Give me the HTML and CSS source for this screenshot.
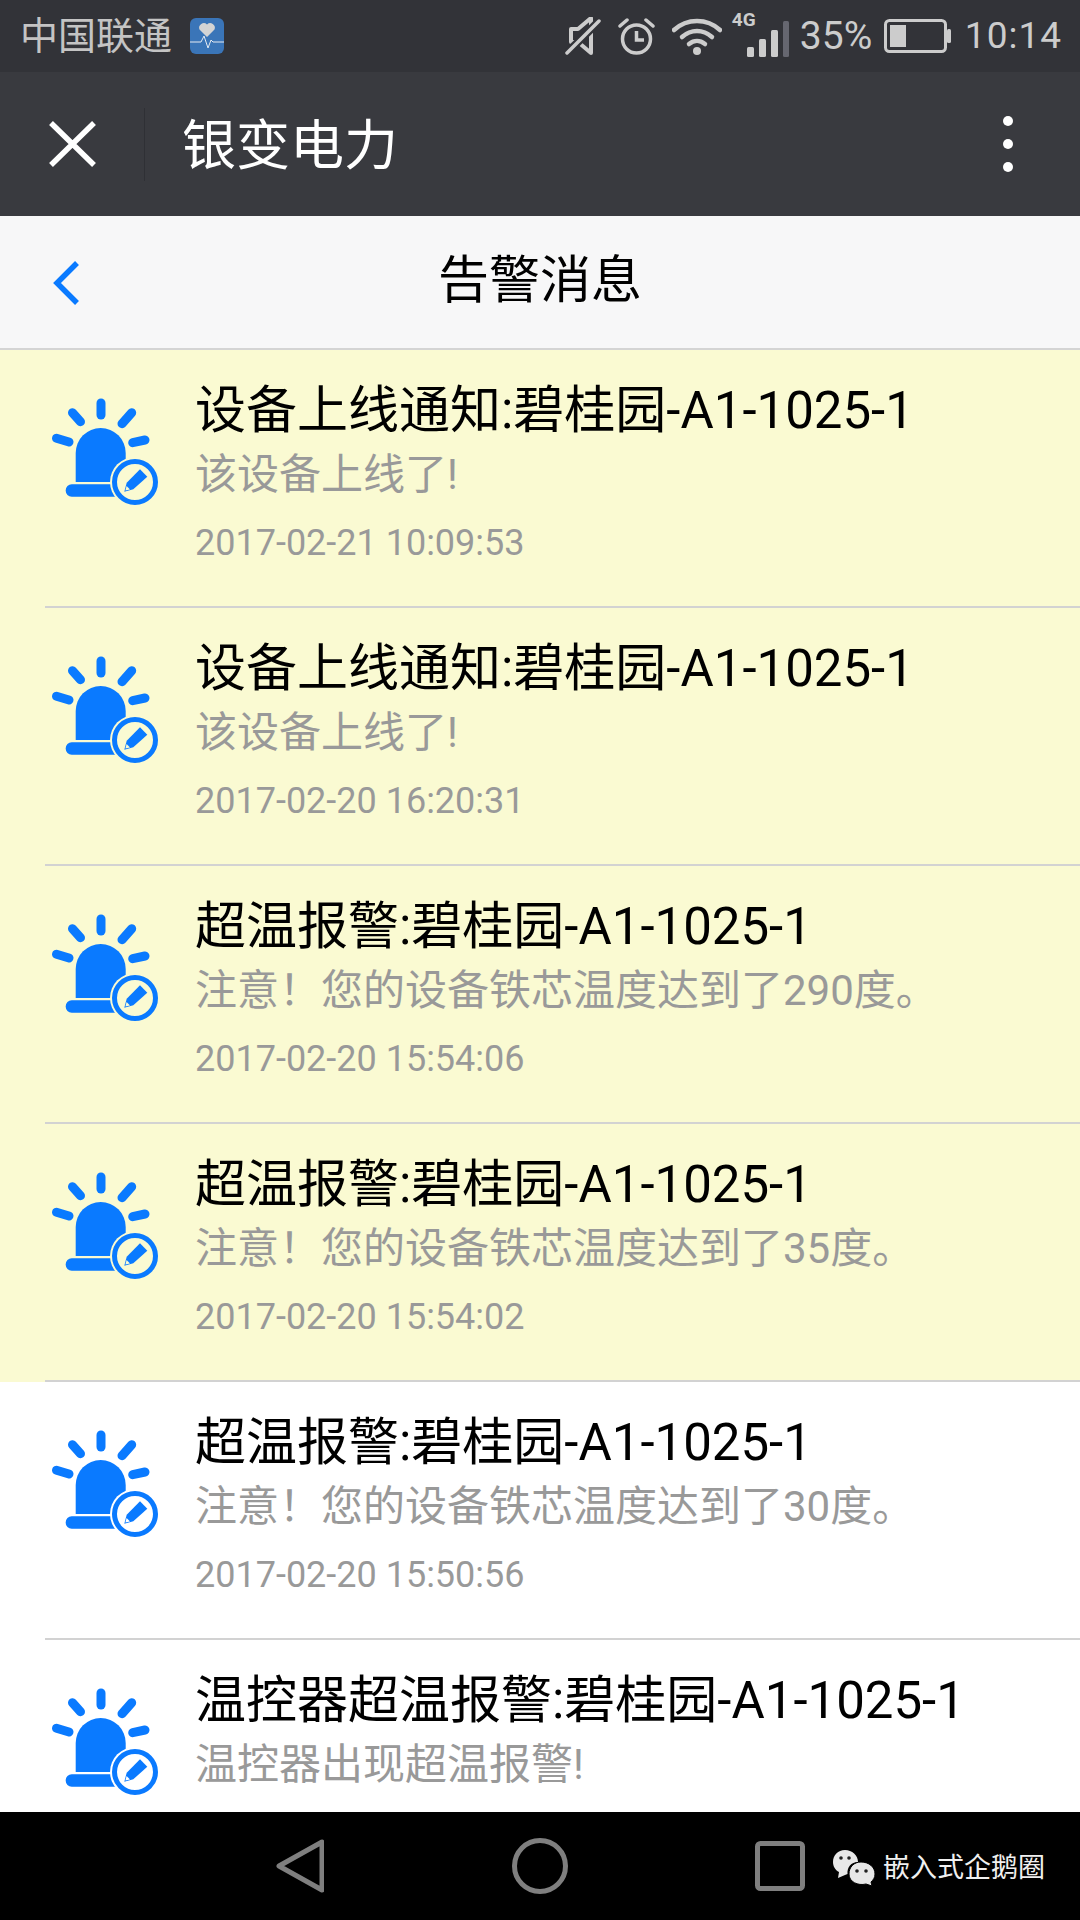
FILE: index.html
```html
<!DOCTYPE html>
<html lang="zh">
<head>
<meta charset="utf-8">
<title>告警消息</title>
<link rel="stylesheet" href="styles.css">
</head>
<body>
<svg class="defs" width="0" height="0" aria-hidden="true">
  <symbol id="siren" viewBox="0 0 110 110">
    <g class="rays">
      <line x1="51" y1="7" x2="51" y2="19"/>
      <line x1="22.500" y1="16.700" x2="30.500" y2="25.700"/>
      <line x1="81.700" y1="16.700" x2="72" y2="27.700"/>
      <line x1="6.500" y1="42.300" x2="19" y2="46"/>
      <line x1="95" y1="44" x2="82.700" y2="46.700"/>
    </g>
    <path class="blue" d="M25.700 86V57a25 25 0 0 1 50 0V86Z"/>
    <rect class="blue" x="15.700" y="88.300" width="72" height="12.400" rx="6"/>
    <circle class="gap" cx="85" cy="86" r="25"/>
    <circle class="ring" cx="85" cy="86" r="20.500"/>
    <path class="blue" d="M74.300 95.700 76.700 86.700 90 73.300 97.300 80.700 83.300 93.300Z"/>
    <path class="gap" d="M75.400 94.600 76.600 90 80 93.400Z"/>
  </symbol>
</svg>
<div class="page">
  <div class="status">
    <div class="status-left">
      <span class="carrier">中国联通</span>
      <svg class="health" width="34" height="36" viewBox="0 0 34 36">
        <rect width="34" height="36" rx="6" fill="#3a75b8"/>
        <path d="M17 19 9.500 11.500a4.600 4.600 0 0 1 7.500-5 4.600 4.600 0 0 1 7.500 5Z" fill="#d4d4d4"/>
        <path d="M0 24H11L14 18 18 30 21 22 23 24H34" fill="none" stroke="#e4eaf2" stroke-width="1"/>
      </svg>
    </div>
    <div class="status-right">
      <svg class="ico-mute" width="36" height="38" viewBox="0 0 36 38">
        <path d="M6 13H13L26 2V37L13 26 6 26Z" fill="none" stroke="#ccc" stroke-width="4" stroke-linejoin="round" transform="translate(0 -1)"/>
        <line x1="2" y1="36" x2="34" y2="4" stroke="#323338" stroke-width="8"/>
        <line x1="2" y1="36" x2="34" y2="4" stroke="#ccc" stroke-width="3.500" stroke-linecap="round"/>
      </svg>
      <svg class="ico-alarm" width="37" height="38" viewBox="0 0 37 38">
        <circle cx="18.500" cy="22" r="14" fill="none" stroke="#ccc" stroke-width="3.500"/>
        <path d="M18.500 14V23H26" fill="none" stroke="#ccc" stroke-width="3.500"/>
        <path d="M2 9 9 3M35 9 28 3" stroke="#ccc" stroke-width="3.500" stroke-linecap="round"/>
      </svg>
      <svg class="ico-wifi" width="50" height="38" viewBox="0 0 50 38">
        <path d="M2 13C15 1 35 1 48 13" fill="none" stroke="#ccc" stroke-width="4.500" stroke-linecap="round"/>
        <path d="M10 20C19 12 31 12 40 20" fill="none" stroke="#ccc" stroke-width="4.500" stroke-linecap="round"/>
        <path d="M17 27C22 23 28 23 33 27" fill="none" stroke="#ccc" stroke-width="4.500" stroke-linecap="round"/>
        <circle cx="25" cy="34" r="4" fill="#ccc"/>
      </svg>
      <div class="signal">
        <span class="four-g">4G</span>
        <svg width="43" height="36" viewBox="0 0 43 36" class="bars">
          <rect x="0" y="26" width="7" height="10" rx="1.500" fill="#ccc"/>
          <rect x="12" y="18" width="7" height="18" rx="1.500" fill="#ccc"/>
          <rect x="24" y="9" width="7" height="27" rx="1.500" fill="#ccc"/>
          <rect x="36" y="0" width="6" height="36" rx="1.500" fill="#666770"/>
        </svg>
      </div>
      <span class="percent">35%</span>
      <svg class="ico-battery" width="67" height="34" viewBox="0 0 67 34">
        <rect x="1.500" y="1.500" width="60" height="31" rx="4" fill="none" stroke="#ccc" stroke-width="3"/>
        <rect x="6" y="6" width="16" height="22" fill="#ccc"/>
        <rect x="63" y="10" width="4" height="14" rx="1.500" fill="#ccc"/>
      </svg>
      <span class="clock">10:14</span>
    </div>
  </div>

  <div class="nav">
    <svg class="close" width="47" height="46" viewBox="0 0 47 46">
      <path d="M2 2 45 44M45 2 2 44" stroke="#fff" stroke-width="5.500"/>
    </svg>
    <div class="nav-div"></div>
    <div class="nav-title">银变电力</div>
    <div class="more"><i></i><i></i><i></i></div>
  </div>

  <div class="header">
    <svg class="back" width="26" height="44" viewBox="0 0 26 44">
      <path d="M24 2 4 22 24 42" fill="none" stroke="#0a7aff" stroke-width="5.500"/>
    </svg>
    <div class="header-title">告警消息</div>
  </div>

  <div class="list">
    <div class="item unread"><div class="row">
      <svg class="siren"><use href="#siren"/></svg>
      <div class="text">
        <div class="title">设备上线通知:碧桂园-A1-1025-1</div>
        <div class="sub">该设备上线了!</div>
        <div class="date">2017-02-21 10:09:53</div>
      </div>
    </div></div>
    <div class="item unread"><div class="row">
      <svg class="siren"><use href="#siren"/></svg>
      <div class="text">
        <div class="title">设备上线通知:碧桂园-A1-1025-1</div>
        <div class="sub">该设备上线了!</div>
        <div class="date">2017-02-20 16:20:31</div>
      </div>
    </div></div>
    <div class="item unread"><div class="row">
      <svg class="siren"><use href="#siren"/></svg>
      <div class="text">
        <div class="title">超温报警:碧桂园-A1-1025-1</div>
        <div class="sub">注意！您的设备铁芯温度达到了290度。</div>
        <div class="date">2017-02-20 15:54:06</div>
      </div>
    </div></div>
    <div class="item unread"><div class="row">
      <svg class="siren"><use href="#siren"/></svg>
      <div class="text">
        <div class="title">超温报警:碧桂园-A1-1025-1</div>
        <div class="sub">注意！您的设备铁芯温度达到了35度。</div>
        <div class="date">2017-02-20 15:54:02</div>
      </div>
    </div></div>
    <div class="item"><div class="row">
      <svg class="siren"><use href="#siren"/></svg>
      <div class="text">
        <div class="title">超温报警:碧桂园-A1-1025-1</div>
        <div class="sub">注意！您的设备铁芯温度达到了30度。</div>
        <div class="date">2017-02-20 15:50:56</div>
      </div>
    </div></div>
    <div class="item"><div class="row row-last">
      <svg class="siren"><use href="#siren"/></svg>
      <div class="text">
        <div class="title">温控器超温报警:碧桂园-A1-1025-1</div>
        <div class="sub">温控器出现超温报警!</div>
      </div>
    </div></div>
  </div>

  <div class="sysnav">
    <svg class="sys-back" width="48" height="54" viewBox="0 0 48 54">
      <path d="M46 3V51L3 27Z" fill="none" stroke="#7f7f7f" stroke-width="5" stroke-linejoin="round"/>
    </svg>
    <svg class="sys-home" width="56" height="56" viewBox="0 0 56 56">
      <circle cx="28" cy="28" r="25.500" fill="none" stroke="#7f7f7f" stroke-width="5"/>
    </svg>
    <svg class="sys-recent" width="50" height="50" viewBox="0 0 50 50">
      <rect x="2.500" y="2.500" width="45" height="45" rx="3" fill="none" stroke="#7f7f7f" stroke-width="5"/>
    </svg>
    <div class="watermark">
      <svg width="42" height="36" viewBox="0 0 42 36">
        <path d="M12 0C19 0 25 5 25 12 18 12 14 17 14.500 24L12 25 5 28 6 22C2 20 0 16 0 12 0 5 5 0 12 0Z" fill="#e8e8e8"/>
        <path d="M28 12C36 12 42 17 42 24 42 28 40 30 38 32L39 36 33 34C25 36 16 32 16 24 16 17 21 12 28 12Z" fill="#e8e8e8" stroke="#000" stroke-width="1"/>
        <circle cx="8" cy="8" r="1.800" fill="#222"/><circle cx="16" cy="8" r="1.800" fill="#222"/>
        <circle cx="24" cy="21" r="1.800" fill="#222"/><circle cx="33" cy="21" r="1.800" fill="#222"/>
      </svg>
      <span>嵌入式企鹅圈</span>
    </div>
  </div>
</div>
</body>
</html>
```

FILE: styles.css
```css
* { box-sizing: border-box; }
html, body { margin: 0; padding: 0; }
body {
  width: 1080px;
  height: 1920px;
  overflow: hidden;
  font-family: Roboto, "Noto Sans CJK SC", sans-serif;
}
.defs { display: block; height: 0; }
.page {
  width: 1080px;
  height: 1920px;
  display: flex;
  flex-direction: column;
  overflow: hidden;
  background: #fff;
}

/* status bar */
.status {
  height: 72px;
  flex: none;
  background: #323338;
  color: #ccc;
  display: flex;
  align-items: center;
  justify-content: space-between;
  padding: 0 18px 0 20px;
}
.status-left { display: flex; align-items: center; gap: 18px; }
.carrier { font-size: 38px; line-height: 72px; color: #c4c4c4; }
.status-right { display: flex; align-items: center; }
.ico-mute { margin-right: 17px; }
.ico-alarm { margin-right: 17px; }
.ico-wifi { margin-right: 10px; }
.signal {
  width: 58px;
  height: 44px;
  position: relative;
  margin-right: 10px;
  margin-top: -2px;
}
.four-g {
  position: absolute;
  left: 0;
  top: -3px;
  font: 700 19px/20px Roboto, sans-serif;
  color: #ccc;
}
.bars { position: absolute; left: 15px; top: 8px; }
.percent { font-size: 39px; line-height: 72px; width: 84px; color: #ccc; white-space: nowrap; }
.ico-battery { margin-right: 14px; }
.clock { font-size: 37px; line-height: 72px; letter-spacing: 1px; color: #ccc; }

/* WeChat nav */
.nav {
  height: 144px;
  flex: none;
  background: #393a3f;
  display: flex;
  align-items: center;
  padding-left: 49px;
}
.close { flex: none; margin-right: 48px; }
.nav-div { width: 1px; height: 73px; background: #2f3035; margin-right: 37px; }
.nav-title { font-size: 54px; line-height: 72px; color: #fff; flex: 1; margin-top: 6px; }
.more {
  display: flex;
  flex-direction: column;
  gap: 13px;
  margin-right: 67px;
}
.more i { display: block; width: 10px; height: 10px; border-radius: 50%; background: #fff; }

/* page header */
.header {
  height: 134px;
  flex: none;
  background: #f7f7f8;
  border-bottom: 2px solid #d4d4d4;
  display: flex;
  align-items: center;
  justify-content: center;
  position: relative;
}
.back { position: absolute; left: 53px; top: 45px; }
.header-title { font-size: 51px; line-height: 70px; color: #000; margin-top: -2px; }

/* list */
.list { flex: 1; min-height: 0; overflow: hidden; }
.item { --item-bg: #fff; background: var(--item-bg); padding-left: 45px; }
.item.unread { --item-bg: #fafad2; }
.row {
  height: 258px;
  display: flex;
  align-items: flex-start;
  border-bottom: 2px solid #d2d2d2;
  padding: 46px 0 0 5px;
}
.row-last { height: 172px; border-bottom: 0; }
.siren { width: 110px; height: 110px; flex: none; }
.rays line { stroke: #0a7aff; stroke-width: 9; stroke-linecap: round; }
.blue { fill: #0a7aff; }
.gap { fill: var(--item-bg); }
.ring { fill: var(--item-bg); stroke: #0a7aff; stroke-width: 5; }
.text { margin-left: 35px; margin-top: -15px; }
.title { font-size: 51px; line-height: 60px; color: #000; white-space: nowrap; }
.sub { font-size: 42px; line-height: 60px; color: #999; margin-top: 4px; white-space: nowrap; }
.date { font-size: 36px; line-height: 48px; color: #999; margin-top: 14px; white-space: nowrap; }

/* system nav */
.sysnav {
  height: 108px;
  flex: none;
  background: #000;
  position: relative;
  display: flex;
  align-items: center;
  padding-left: 276px;
}
.sys-back { margin-right: 188px; }
.sys-home { margin-right: 187px; }
.watermark {
  position: absolute;
  left: 833px;
  top: 38px;
  display: flex;
  align-items: center;
  gap: 8px;
  color: #f0f0f0;
  font-size: 27px;
  line-height: 36px;
}
```
